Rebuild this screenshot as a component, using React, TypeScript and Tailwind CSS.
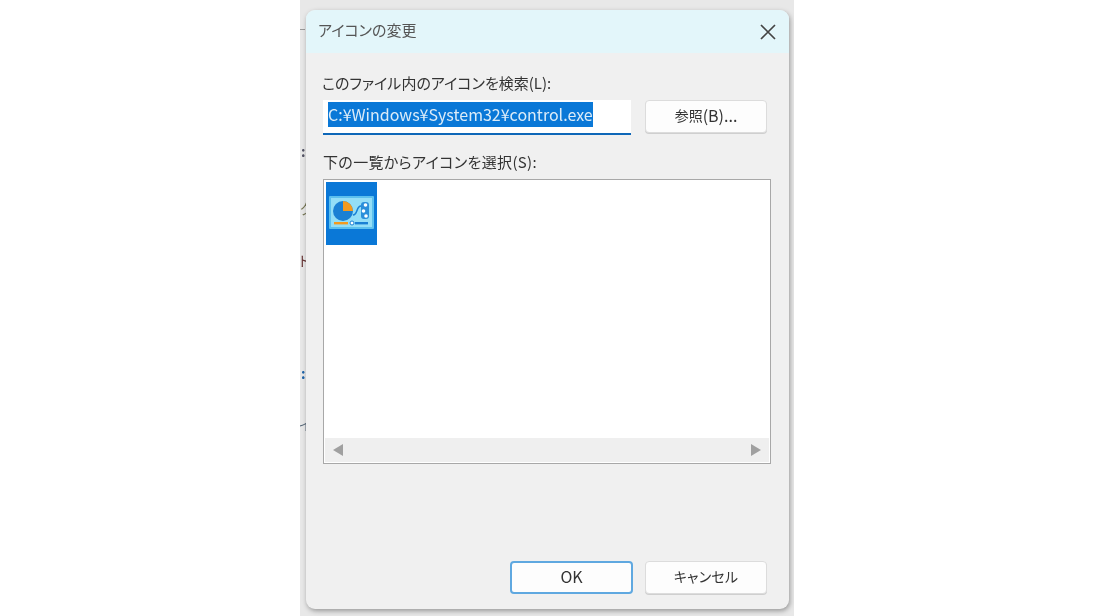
const jp = "font-['Noto_Sans_CJK_JP','Noto_Sans',sans-serif]";

function ControlPanelIcon() {
  return (
    <svg width="51" height="63" viewBox="0 0 51 63" className="block">
      <rect width="51" height="63" fill="#0a78d7" />
      <rect x="3" y="14" width="45" height="33" rx="1" fill="#5cc0ee" />
      <rect x="5" y="16" width="41" height="29" fill="#93def7" />
      <circle cx="17" cy="29" r="10" fill="#1a80d4" />
      <path d="M17 19 a10 10 0 0 1 10 10 h-10z" fill="#f39a1e" />
      <path d="M27 33 C32 33 30 24 35 24" fill="none" stroke="#1a80d4" strokeWidth="1.5" />
      <rect x="35" y="20" width="8" height="17" rx="3" fill="#2a8fda" />
      <circle cx="39.5" cy="23" r="1.8" fill="#fff" />
      <circle cx="37.5" cy="29" r="1.8" fill="#fff" />
      <circle cx="40" cy="34" r="1.8" fill="#fff" />
      <rect x="8" y="40" width="14" height="2.4" fill="#f39a1e" />
      <rect x="29" y="40" width="13" height="2.4" fill="#1a80d4" />
      <circle cx="26" cy="41" r="2" fill="#fff" stroke="#1a80d4" />
    </svg>
  );
}

function DialogButton({
  children,
  primary,
}: {
  children: React.ReactNode;
  primary?: boolean;
}) {
  return (
    <button
      className={`flex h-[33px] items-center justify-center rounded-[4px] bg-[#fdfdfd] pb-[3px] leading-none text-[#333] ${
        primary
          ? "w-[123px] border-2 border-[#5fa8e0]"
          : "w-[122px] border border-[#dcdcdc] shadow-[0_1px_0_#cfcfcf]"
      }`}
    >
      {children}
    </button>
  );
}

export default function App() {
  return (
    <div className={`flex h-[616px] w-full justify-center overflow-hidden bg-white ${jp} [font-feature-settings:'palt'] blur-[0.4px]`}>
      {/* Window behind the dialog */}
      <div className="relative flex w-[494px] flex-col overflow-hidden bg-[#e8e8e8] pb-[7px] pl-[6px] pr-[5px] pt-[10px]">
        <span className="absolute left-0 top-[29px] h-px w-[5px] bg-[#999]" />
        <span className="absolute left-[1px] top-[141px] text-[14px] font-bold leading-5 text-[#556]">:</span>
        <span className="absolute left-0 top-[198px] text-[14px] leading-5 text-[#775]">ク</span>
        <span className="absolute left-[-1px] top-[250px] text-[14px] leading-5 text-[#633]">ト</span>
        <span className="absolute left-[1px] top-[363px] text-[14px] font-bold leading-5 text-[#26a]">:</span>
        <span className="absolute left-[-1px] top-[414px] text-[14px] leading-5 text-[#567]">イ</span>

        {/* Dialog */}
        <div className="relative flex flex-1 flex-col overflow-hidden rounded-[9px] bg-[#f0f0f0] shadow-[1px_2px_5px_rgba(0,0,0,0.35)]">
          <div className="flex h-[43px] shrink-0 items-center justify-between bg-[#e3f6fa] pl-[12px] pr-[13px]">
            <span className="-mt-[3px] text-[15px] text-[#555]">アイコンの変更</span>
            <svg width="16" height="16" viewBox="0 0 16 16" fill="none" stroke="#444" strokeWidth="1.7">
              <path d="M1 1 15 15M15 1 1 15" />
            </svg>
          </div>

          <div className="flex flex-1 flex-col pb-[15px] pl-[16px] pr-[22px] pt-[19px]">
            <p className="text-[15px] leading-[22px] text-[#333]">このファイル内のアイコンを検索(L):</p>

            <div className="mt-[6px] flex items-start justify-between">
              <div className="ml-px flex h-[35px] w-[308px] items-center border-b-2 border-[#0e67b8] bg-white pb-[5px] pl-[5px]">
                <span className="bg-[#0a78d7] text-[16px] leading-[25px] text-[#dcecf8]">
                  C:¥Windows¥System32¥control.exe
                </span>
              </div>
              <DialogButton>
                <span className="text-[14px]">参照</span>
                <span className="text-[16px]">(B)...</span>
              </DialogButton>
            </div>

            <p className="ml-px mt-[16px] text-[15px] leading-[22px] tracking-[0.35px] text-[#333]">下の一覧からアイコンを選択(S):</p>

            {/* Icon list */}
            <div className="ml-px mt-[6px] flex h-[285px] w-[448px] flex-col border border-[#a8a8a8] bg-white p-px">
              <div className="flex-1 pl-[1px] pt-[1px]">
                <ControlPanelIcon />
              </div>
              <div className="flex h-[24px] items-center justify-between bg-[#efefef] px-[8px]">
                <span className="h-0 w-0 border-y-[6px] border-r-[10px] border-y-transparent border-r-[#a0a0a0]" />
                <span className="h-0 w-0 border-y-[6px] border-l-[10px] border-y-transparent border-l-[#a0a0a0]" />
              </div>
            </div>

            <div className="mt-auto flex justify-end gap-[12px]">
              <DialogButton primary>
                <span className="text-[16px]">OK</span>
              </DialogButton>
              <DialogButton>
                <span className="text-[14px] tracking-[0.2px]">キャンセル</span>
              </DialogButton>
            </div>
          </div>
        </div>
      </div>
    </div>
  );
}
